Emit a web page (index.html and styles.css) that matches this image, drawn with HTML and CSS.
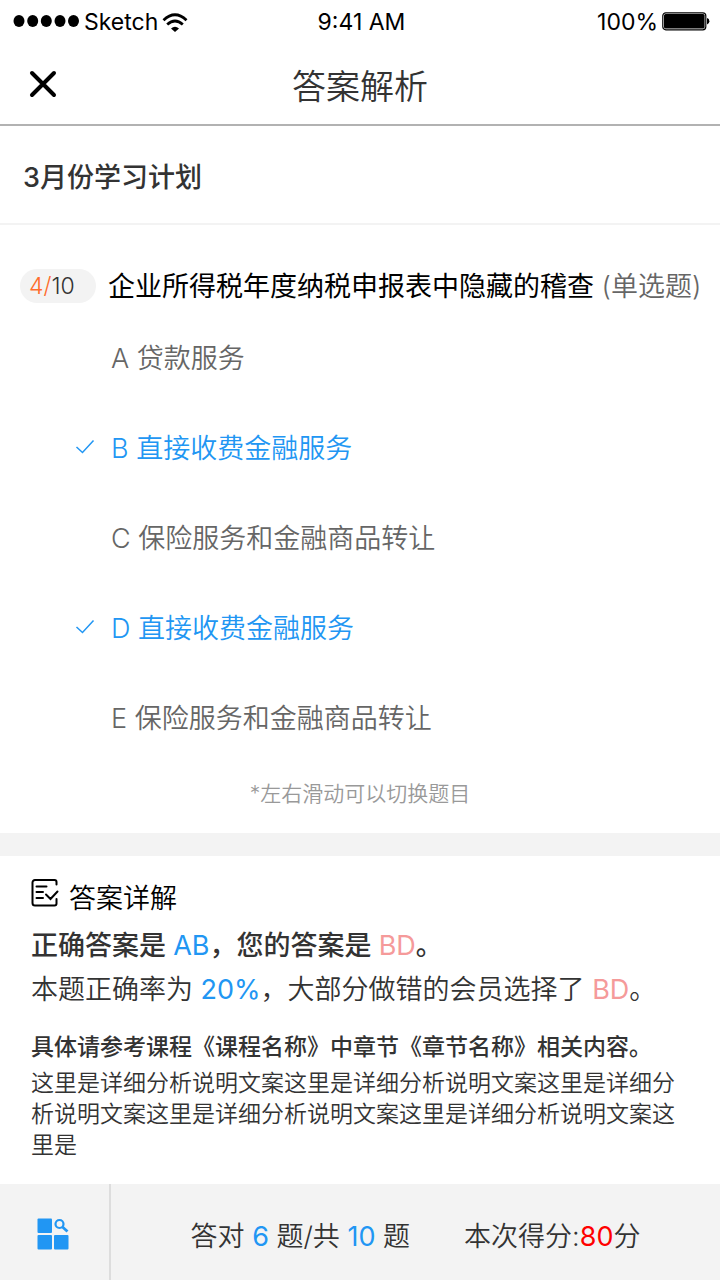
FILE: index.html
```
<!DOCTYPE html>
<html lang="zh-CN">
<head>
    <meta charset="UTF-8">
    <meta name="viewport" content="width=device-width, initial-scale=1.0">
    <title>答案解析</title>
    <link rel="stylesheet" href="styles.css">
</head>

<body>
<div class="status">
    <div class="status__left">
        <svg class="dots" viewBox="0 0 67 14" width="67" height="14">
            <ellipse cx="6" cy="6" rx="5.5" ry="6"/>
            <ellipse cx="19.7" cy="6" rx="5.5" ry="6"/>
            <ellipse cx="33.3" cy="6" rx="5.5" ry="6"/>
            <ellipse cx="47" cy="6" rx="5.5" ry="6"/>
            <ellipse cx="60.5" cy="6" rx="5.5" ry="6"/>
        </svg>
        <span>Sketch</span>
        <svg class="wifi" viewBox="0 0 26 19" width="26" height="19">
            <path d="M1.5 7.2Q13-3.6 24.5 7.2M5.2 11.5Q13 4.5 20.8 11.5" fill="none" stroke="#000" stroke-width="2.8"/>
            <path d="M9 15.4Q13 12 17 15.4L13 19z"/>
        </svg>
    </div>
    <span class="status__time">9:41 AM</span>
    <div class="status__right">
        <span>100%</span>
        <svg class="battery" viewBox="0 0 48 20" width="48" height="20">
            <rect x="0.8" y="0.8" width="43" height="17" rx="3" fill="none" stroke="#000" stroke-width="1.2"/>
            <rect x="2" y="2" width="40.6" height="14.6" rx="1.5"/>
            <path d="M45 6q2.4.6 2.4 3.3T45 12.5z"/>
        </svg>
    </div>
</div>

<header class="nav">
    <button class="nav__close" type="button" aria-label="关闭">
        <svg viewBox="0 0 28 28" width="28" height="28">
            <path d="M3 3l22 22M25 3L3 25" fill="none" stroke="#000" stroke-width="4" stroke-linecap="round"/>
        </svg>
    </button>
    <h1 class="nav__title">答案解析</h1>
</header>

<h2 class="plan">3月份学习计划</h2>

<main>
    <section class="question">
        <div class="question__head">
            <span class="count"><em>4/</em>10</span>
            <p class="question__text">企业所得税年度纳税申报表中隐藏的稽查 <span class="question__type">(单选题)</span></p>
        </div>
        <ul class="options">
            <li class="option">A 贷款服务</li>
            <li class="option option--on">
                <svg class="tick" viewBox="0 0 20 16" width="20" height="16"><path d="M1.5 8l6 5.5L18.5 1.5"/></svg>
                B 直接收费金融服务
            </li>
            <li class="option">C 保险服务和金融商品转让</li>
            <li class="option option--on">
                <svg class="tick" viewBox="0 0 20 16" width="20" height="16"><path d="M1.5 8l6 5.5L18.5 1.5"/></svg>
                D 直接收费金融服务
            </li>
            <li class="option">E 保险服务和金融商品转让</li>
        </ul>
        <p class="hint">*左右滑动可以切换题目</p>
    </section>

    <section class="answer">
        <h3 class="answer__head">
            <svg class="answer__icon" viewBox="0 0 28 28" width="28" height="28">
                <path d="M25.5 5.5V3a2 2 0 0 0-2-2H4a2.500 2.500 0 0 0-2.500 2.500v20.500A2.500 2.500 0 0 0 4 26.500h19.500a2 2 0 0 0 2-2v-4.500"/>
                <path d="M5.5 7.5H15.5M5.5 13H12M5.5 19H12M15 15.5l4.5 4.5 7-7.5"/>
            </svg>
            答案详解
        </h3>
        <p class="answer__line answer__line--bold">正确答案是 <span class="blue">AB</span>，您的答案是 <span class="pink">BD</span>。</p>
        <p class="answer__line">本题正确率为 <span class="blue">20%</span>，大部分做错的会员选择了 <span class="pink">BD</span>。</p>
        <p class="answer__course">具体请参考课程《课程名称》中章节《章节名称》相关内容。</p>
        <p class="answer__detail">这里是详细分析说明文案这里是详细分析说明文案这里是详细分析说明文案这里是详细分析说明文案这里是详细分析说明文案这里是</p>
    </section>
</main>

<footer class="footer">
    <button class="footer__card" type="button" aria-label="答题卡">
        <svg viewBox="0 0 32 32" width="32" height="32" fill="#2196f3">
            <rect x="0.5" y="0.5" width="14.5" height="14.5" rx="1"/>
            <rect x="0.5" y="17" width="14.5" height="14.5" rx="1"/>
            <rect x="17" y="17" width="14.5" height="14.5" rx="1"/>
            <circle cx="22.5" cy="6" r="4" fill="none" stroke="#2196f3" stroke-width="2.2"/>
            <path d="M25.5 9l5 4.5" stroke="#2196f3" stroke-width="2.8"/>
        </svg>
    </button>
    <div class="footer__result">
        <span>答对 <b class="blue">6</b> 题/共 <b class="blue">10</b> 题</span>
        <span>本次得分:<b class="red">80</b>分</span>
    </div>
</footer>
</body>
</html>
```
FILE: styles.css
```
* {
    box-sizing: border-box;
    padding: 0;
    margin: 0;
}

body {
    min-height: 100vh;
    display: flex;
    flex-direction: column;
    font-family: Inter, "Noto Sans CJK SC", sans-serif;
    font-size: 27px;
    font-weight: 350;
    color: #333;
    background-color: #fff;
}

button {
    border: none;
    background: none;
    cursor: pointer;
}

svg {
    display: block;
    flex-shrink: 0;
}

/* status bar */
.status {
    display: grid;
    grid-template-columns: 1fr auto 1fr;
    align-items: center;
    height: 44px;
    padding: 0 10px 0 13px;
    font-size: 23px;
    font-weight: 400;
    color: #000;
}

.status__left,
.status__right {
    display: flex;
    align-items: center;
}

.status__left {
    gap: 4px;
}

.status__right {
    justify-content: flex-end;
    gap: 4px;
}

/* nav */
.nav {
    display: grid;
    grid-template-columns: 86px 1fr 86px;
    align-items: center;
    height: 82px;
    border-bottom: 2px solid #b2b2b2;
}

.nav__close {
    display: flex;
    justify-content: center;
}

.nav__title {
    font-size: 34px;
    font-weight: 350;
    text-align: center;
}

.plan {
    padding: 7px 23px 0;
    font-size: 27px;
    font-weight: 500;
    line-height: 90px;
    border-bottom: 2px solid #f3f3f3;
}

/* question */
.question {
    padding: 44px 0 24px;
    border-bottom: 23px solid #f3f3f3;
}

.question__head {
    display: flex;
    align-items: flex-start;
    gap: 12px;
    padding: 0 12px 0 20px;
    line-height: 36px;
}

.count {
    flex-shrink: 0;
    width: 76px;
    padding-left: 9px;
    font-size: 23px;
    line-height: 34px;
    border-radius: 17px;
    background-color: #f3f3f3;
}

.count em {
    font-style: normal;
    color: #ff6d2d;
}

.question__text {
    font-weight: 400;
    color: #000;
}

.question__type {
    font-weight: 350;
    color: #666;
}

.options {
    margin-top: 9px;
    list-style: none;
}

.option {
    position: relative;
    padding-left: 111px;
    line-height: 90px;
    color: #666;
}

.option--on {
    color: #2196f3;
}

.tick {
    position: absolute;
    top: 35px;
    left: 75px;
    fill: none;
    stroke: #2196f3;
    stroke-width: 1.5;
}

.hint {
    margin-top: 15px;
    font-size: 21px;
    line-height: 30px;
    text-align: center;
    color: #999;
}

/* answer */
.answer {
    padding: 21px 31px 23px;
}

.answer__head {
    display: flex;
    align-items: flex-start;
    gap: 10px;
    margin-bottom: 3px;
    font-size: 27px;
    font-weight: 350;
    line-height: 44px;
    color: #000;
}

.answer__icon {
    margin-top: 2px;
    fill: none;
    stroke: #000;
    stroke-width: 2;
    stroke-linecap: round;
}

.answer__line {
    line-height: 44px;
}

.answer__line--bold {
    font-weight: 500;
}

.answer__course {
    margin-top: 17px;
    font-size: 23px;
    font-weight: 500;
    line-height: 36px;
}

.answer__detail {
    margin-top: 3px;
    font-size: 23px;
    line-height: 31px;
}

.blue,
.pink,
.red {
    font-weight: 400;
}

.blue {
    color: #2196f3;
}

.pink {
    color: #f59a9a;
}

.red {
    color: #f00;
}

/* footer */
.footer {
    display: flex;
    height: 96px;
    margin-top: auto;
    background-color: #f3f3f3;
}

.footer__card {
    display: flex;
    align-items: center;
    justify-content: center;
    width: 111px;
    padding: 4px 4px 0 0;
    border-right: 2px solid #ddd;
}

.footer__result {
    flex: 1;
    display: flex;
    align-items: center;
    justify-content: center;
    gap: 54px;
    padding-top: 4px;
}
```
